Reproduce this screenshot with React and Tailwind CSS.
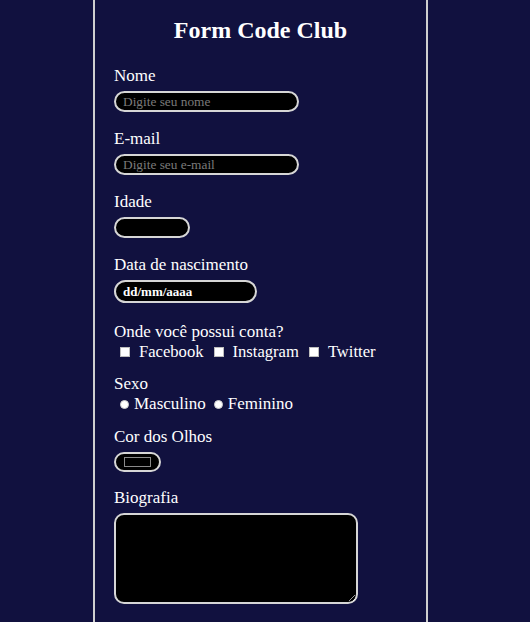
import React from 'react';

const serif = "font-['Liberation_Serif','Times_New_Roman',serif]";

function Label({ children, className = '' }) {
  return <div className={`text-[17px] leading-[20px] text-white ${className}`}>{children}</div>;
}

const pill = `block bg-black border-2 border-[#d6d6d6] rounded-full outline-none ${serif}`;

function Check({ label, first }) {
  return (
    <>
      <input
        type="checkbox"
        className={`appearance-none w-[10px] h-[10px] bg-white border border-[#bdbdbd] ${first ? 'ml-[6px]' : 'ml-[10px]'}`}
      />
      <span className="ml-[9px]">{label}</span>
    </>
  );
}

function Radio({ label, first }) {
  return (
    <>
      <input
        type="radio"
        name="sexo"
        className={`appearance-none w-[9px] h-[9px] rounded-full bg-white border border-[#cfcfcf] ${first ? 'ml-[6px]' : 'ml-[8px]'}`}
      />
      <span className="ml-[5px]">{label}</span>
    </>
  );
}

export default function App() {
  return (
    <div className={`min-h-screen w-full bg-[#11113f] ${serif}`}>
      <div className="ml-[93px] w-[335px] min-h-[622px] border-x-2 border-[#cfcfcf] pl-[19px] pt-[16px] pb-[20px]">
        <h1 className="text-[24px] leading-[28px] font-bold text-white text-center pr-[19px]">Form Code Club</h1>

        <form className="mt-[22px]">
          <Label>Nome</Label>
          <input
            type="text"
            placeholder="Digite seu nome"
            className={`${pill} mt-[5px] w-[185px] h-[21px] px-[7px] text-[13.33px] text-white placeholder:text-[#7a7a7a]`}
          />

          <Label className="mt-[17px]">E-mail</Label>
          <input
            type="email"
            placeholder="Digite seu e-mail"
            className={`${pill} mt-[5px] w-[185px] h-[21px] px-[7px] text-[13.33px] text-white placeholder:text-[#7a7a7a]`}
          />

          <Label className="mt-[17px]">Idade</Label>
          <input type="number" className={`${pill} mt-[5px] w-[76px] h-[21px] px-[7px] text-[13.33px] text-white`} />

          <Label className="mt-[17px]">Data de nascimento</Label>
          <input
            type="text"
            defaultValue="dd/mm/aaaa"
            className={`${pill} mt-[5px] w-[143px] h-[23px] px-[7px] text-[13px] font-bold text-white`}
          />

          <Label className="mt-[19px]">Onde você possui conta?</Label>
          <div className="flex items-center h-[20px] text-[16.6px] leading-[20px] text-white">
            <Check label="Facebook" first />
            <Check label="Instagram" />
            <Check label="Twitter" />
          </div>

          <Label className="mt-[12px]">Sexo</Label>
          <div className="flex items-center h-[20px] text-[17px] leading-[20px] text-white">
            <Radio label="Masculino" first />
            <Radio label="Feminino" />
          </div>

          <Label className="mt-[13px]">Cor dos Olhos</Label>
          <div className={`${pill} mt-[5px] w-[47px] h-[20px] flex items-center justify-center`}>
            <div className="w-[27px] h-[10px] bg-black border border-[#8a8a8a]" />
          </div>

          <Label className="mt-[16px]">Biografia</Label>
          <textarea className={`block mt-[5px] w-[244px] h-[91px] bg-black border-2 border-[#d6d6d6] rounded-[10px] text-white outline-none ${serif}`} />
        </form>
      </div>
    </div>
  );
}
